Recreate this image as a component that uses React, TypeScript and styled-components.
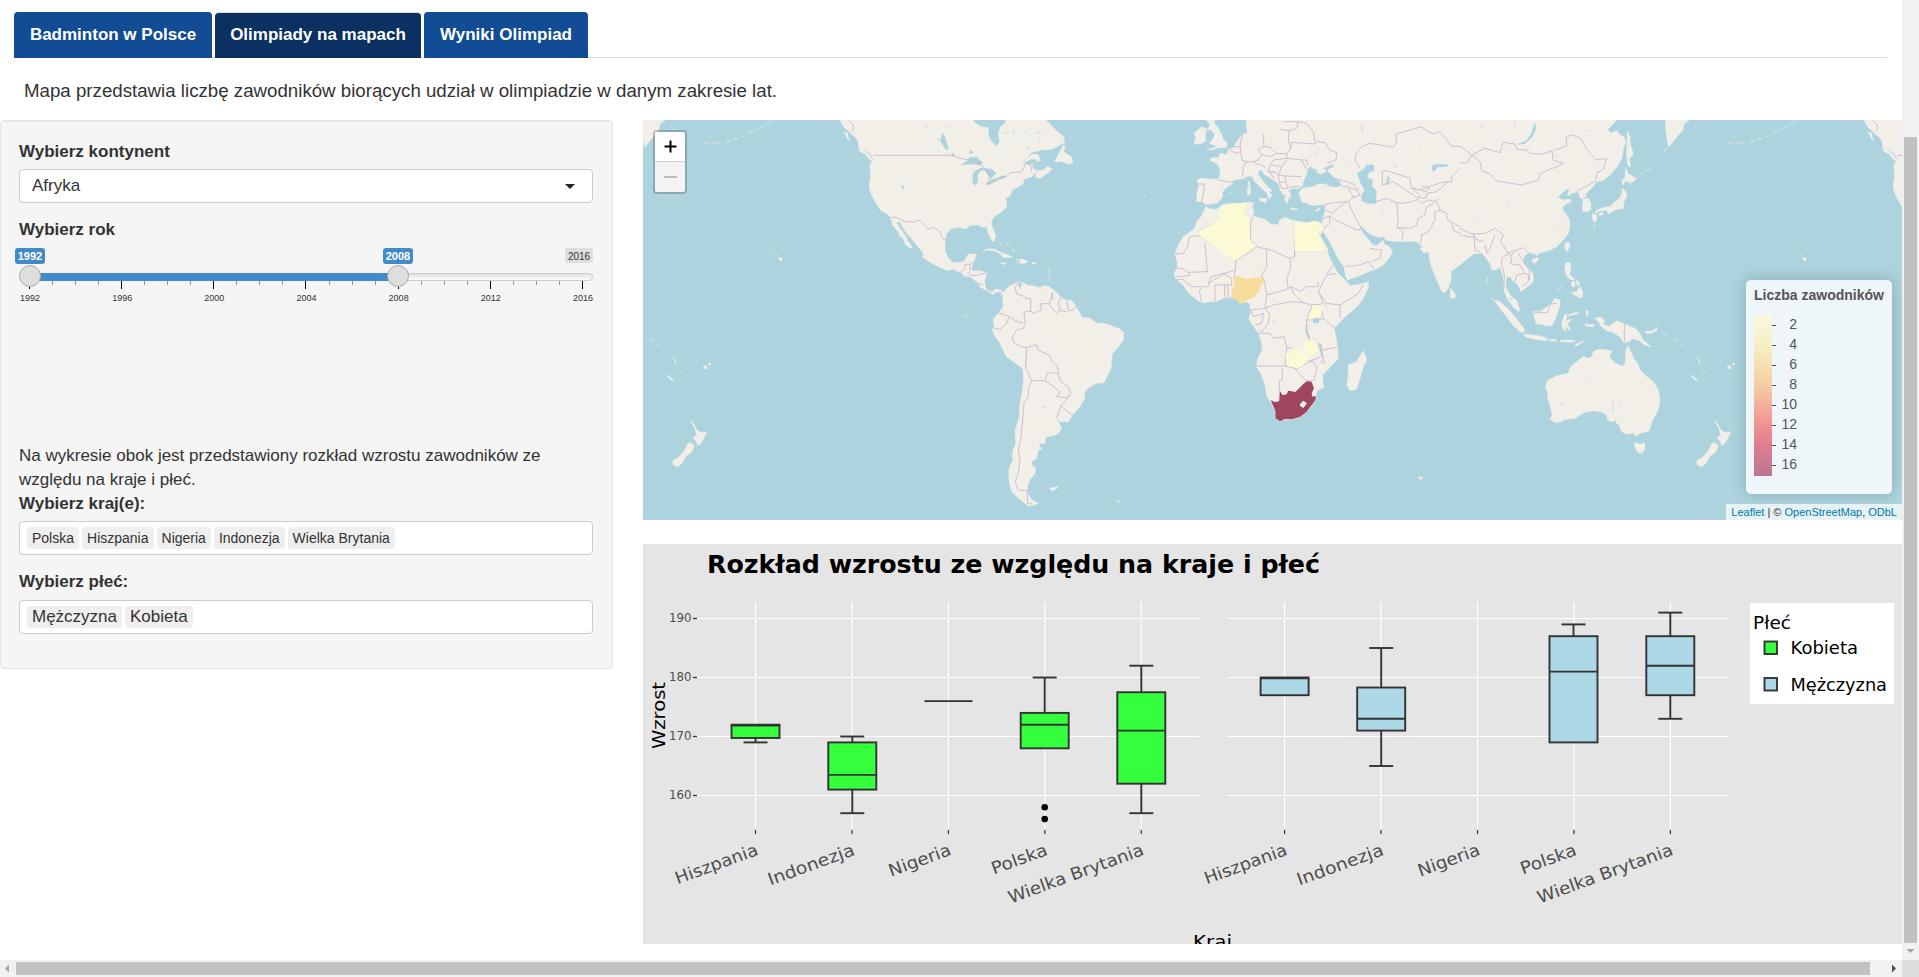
import React from "react";
import styled, { createGlobalStyle } from "styled-components";

const Global = createGlobalStyle`
  * { box-sizing: border-box; }
  html, body { margin: 0; padding: 0; background: #fff; overflow: hidden; }
  body { font-family: "Liberation Sans", Arial, sans-serif; font-size: 17px; line-height: 24.29px; color: #333; }
`;

const Frame = styled.div`
  display: grid;
  grid-template-columns: 1902px 17px;
  grid-template-rows: 960px 17px;
  width: 1919px;
  height: 977px;
  overflow: hidden;
`;
const Page = styled.main`
  overflow: hidden;
  padding-top: 12px;
`;
const Tabs = styled.nav`
  display: flex;
  gap: 3px;
  height: 46px;
  margin: 0 15px 0 14px;
  border-bottom: 1px solid #ddd;
`;
const Tab = styled.a<{ $active?: boolean; $w: number }>`
  width: ${(p) => p.$w}px;
  height: 46px;
  flex: none;
  border-radius: 4px 4px 0 0;
  border-top: 1px solid ${(p) => (p.$active ? "#ddd" : "#114c95")};
  background: ${(p) => (p.$active ? "#0a3161" : "#114c95")};
  color: #fff;
  font-weight: bold;
  line-height: 43px;
  text-align: center;
  white-space: nowrap;
`;
const Intro = styled.p`
  margin: 20px 0 17px 24px;
  font-size: 18.7px;
  line-height: 25px;
`;
const Columns = styled.div`
  display: flex;
  align-items: flex-start;
  gap: 30px;
`;
const Sidebar = styled.aside`
  width: 613px;
  height: 549px;
  padding: 19px 19px 19px 18px;
  background: #f5f5f5;
  border: 1px solid #e3e3e3;
  border-radius: 4px;
  box-shadow: inset 0 1px 1px rgba(0, 0, 0, 0.05);
  flex: none;
`;
const Label = styled.label`
  display: block;
  font-weight: bold;
  margin-bottom: 5px;
`;
const Field = styled.div`
  display: flex;
  align-items: center;
  gap: 3px;
  width: 574px;
  height: 34px;
  margin: 0 0 15px;
  padding: 0 7px;
  background: #fff;
  border: 1px solid #ccc;
  border-radius: 4px;
`;
const Selected = styled.span`
  flex: 1;
  padding-left: 5px;
  line-height: 30px;
  padding-bottom: 1px;
`;
const Caret = styled.span`
  margin-right: 10px;
  border: 5px solid transparent;
  border-top-color: #222;
  border-bottom: 0;
`;
const Chip = styled.span<{ $small?: boolean }>`
  height: 22px;
  padding: 0 5px;
  border-radius: 3px;
  background: #efefef;
  font-size: ${(p) => (p.$small ? 14 : 17)}px;
  line-height: ${(p) => (p.$small ? 22 : 21)}px;
  white-space: nowrap;
`;
const SliderArt = styled.svg`
  display: block;
  width: 590px;
  height: 66px;
  margin: -4px 0 0 -9px;
  overflow: visible;
`;
const Note = styled.p`
  margin: 134px 0 0;
  width: 540px;
`;
const Right = styled.section`
  display: flex;
  flex-direction: column;
  gap: 24px;
  width: 1259px;
`;
const MapBox = styled.div`
  position: relative;
  height: 400px;
  overflow: hidden;
  background: #acd3de;
`;
const Art = styled.svg`
  display: block;
  width: 1259px;
  height: 400px;
`;
const Zoom = styled.div`
  position: absolute;
  left: 10px;
  top: 10px;
  border: 2px solid rgba(0, 0, 0, 0.2);
  border-radius: 4px;
  background-clip: padding-box;
`;
const ZoomButton = styled.div<{ $off?: boolean }>`
  display: grid;
  place-items: center;
  width: 30px;
  height: 30px;
  background: ${(p) => (p.$off ? "#f4f4f4" : "#fff")};
  border-bottom: ${(p) => (p.$off ? "0" : "1px solid #ccc")};
  border-radius: ${(p) => (p.$off ? "0 0 2px 2px" : "2px 2px 0 0")};
  color: ${(p) => (p.$off ? "#bbb" : "#000")};
`;
const Legend = styled.div`
  position: absolute;
  right: 10px;
  top: 160px;
  width: 146px;
  height: 214px;
  padding: 6px 8px;
  border-radius: 5px;
  background: rgba(255, 255, 255, 0.8);
  box-shadow: 0 0 15px rgba(0, 0, 0, 0.2);
  color: #555;
  font-size: 14px;
  line-height: 18px;
`;
const LegendTitle = styled.strong`
  display: block;
  white-space: nowrap;
`;
const LegendArt = styled.svg`
  display: block;
  width: 60px;
  height: 170px;
  margin-top: 11px;
  overflow: visible;
`;
const Credit = styled.div`
  position: absolute;
  right: 0;
  bottom: 0;
  height: 16px;
  width: 176px;
  padding: 0 5px;
  background: rgba(255, 255, 255, 0.7);
  font-size: 11px;
  line-height: 16px;
  white-space: nowrap;
  text-align: right;
  span { color: #0078a8; }
`;
const VBar = styled.div`
  background: #f1f1f1;
  padding: 137px 2px 0;
  display: flex;
  flex-direction: column;
  align-items: center;
`;
const VThumb = styled.div`
  width: 13px;
  height: 806px;
  background: #c1c1c1;
`;
const HBar = styled.div`
  display: flex;
  align-items: center;
  background: #f1f1f1;
`;
const HThumb = styled.div`
  width: 1854px;
  height: 13px;
  background: #c1c1c1;
`;
const Corner = styled.div`
  background: #dcdcdc;
`;
const Arrow = styled.svg`
  display: block;
  flex: none;
`;

/* Map outlines, three units per pixel; one world is 3072 units wide. */
const americas =
  "M590 0L600 30 610 50 625 62 632 70 650 85 656 100 658 112 680 122 697 138 701 150 693 160 690 168 692 200 688 225 691 245 700 265 715 290 723 302 740 310 752 322 758 345 775 365 780 378 790 385 795 402 812 416 816 412 803 392 798 380 785 362 775 348 768 336 780 335 787 350 800 370 818 390 838 415 850 430 848 442 870 457 900 472 925 482 940 477 955 485 965 490 975 499 992 501 1003 510 1018 520 1020 530 1042 543 1060 553 1068 545 1082 545 1088 558 1090 590 1075 610 1062 625 1060 640 1065 652 1057 656 1062 675 1078 695 1092 725 1100 740 1125 758 1148 775 1151 800 1148 840 1140 880 1138 920 1125 965 1128 1000 1118 1025 1119 1050 1107 1075 1107 1110 1115 1145 1140 1168 1165 1188 1180 1186 1194 1180 1175 1170 1162 1150 1162 1130 1170 1108 1185 1090 1187 1075 1175 1065 1174 1055 1190 1045 1195 1020 1205 1018 1195 1002 1215 1000 1218 980 1240 977 1255 970 1265 955 1258 940 1250 925 1262 934 1285 936 1297 915 1320 890 1333 865 1334 845 1350 830 1370 820 1392 818 1402 797 1413 775 1416 732 1435 710 1450 690 1451 668 1440 657 1420 650 1400 642 1370 640 1350 625 1325 622 1320 610 1305 585 1295 572 1270 568 1260 558 1250 548 1228 530 1212 527 1200 533 1180 528 1165 527 1150 518 1140 513 1122 522 1105 530 1090 548 1082 540 1065 538 1055 548 1045 541 1037 532 1033 518 1036 505 1040 488 1020 482 1000 484 993 478 998 460 1005 445 1008 432 985 432 975 452 960 458 940 458 925 445 915 425 915 395 920 370 935 355 960 352 978 357 990 346 1015 345 1028 352 1040 350 1045 370 1055 390 1062 395 1067 380 1060 358 1053 340 1060 322 1085 305 1100 290 1100 275 1095 265 1110 258 1118 238 1135 230 1150 220 1150 208 1175 200 1192 182 1186 200 1200 205 1220 192 1237 176 1222 170 1210 180 1190 183 1175 170 1182 155 1200 152 1195 135 1175 133 1160 145 1145 168 1152 150 1175 127 1205 120 1235 118 1262 104 1274 98 1270 78 1255 68 1235 48 1218 30 1210 0Z";
const eurasia =
  "M620 0L618 30 622 68 610 72 602 80 590 95 582 112 565 120 560 134 540 130 538 142 510 145 514 153 530 160 540 175 540 195 536 208 505 207 480 205 471 212 477 228 471 250 470 275 488 275 497 283 520 282 535 277 547 262 548 245 560 232 577 222 576 213 590 208 610 206 620 200 635 198 645 215 660 230 680 248 685 262 688 268 696 255 685 245 696 242 680 228 668 212 655 195 655 183 665 180 672 192 690 203 706 213 718 223 720 238 728 252 738 258 733 268 741 280 746 270 742 262 752 262 750 250 745 242 757 235 775 235 788 228 790 212 800 192 803 175 815 168 822 178 835 177 830 187 843 192 860 183 848 175 870 165 885 160 878 172 863 180 870 190 885 205 900 213 905 228 890 232 870 230 855 222 835 222 820 230 800 233 785 236 777 250 782 265 785 275 800 280 815 287 835 285 855 283 857 300 850 322 847 340 845 358 865 388 880 415 895 448 912 470 916 495 922 510 950 500 985 485 1010 476 1030 465 1040 452 1050 440 1058 422 1048 410 1032 402 1028 390 1020 400 1008 408 995 403 985 388 972 374 958 350 965 348 978 362 995 375 1015 382 1030 380 1038 390 1055 393 1085 395 1120 393 1135 398 1150 412 1140 415 1152 428 1166 425 1168 445 1175 470 1188 505 1205 542 1213 548 1222 540 1233 510 1233 485 1255 468 1285 445 1300 432 1325 428 1335 440 1350 460 1355 480 1368 480 1380 470 1388 495 1392 520 1393 545 1405 570 1420 592 1437 606 1438 595 1430 572 1415 562 1405 545 1396 530 1400 500 1412 502 1422 515 1435 525 1443 545 1460 532 1475 520 1481 510 1478 490 1462 470 1450 458 1450 440 1465 428 1480 430 1490 436 1500 428 1525 422 1550 410 1570 390 1585 370 1590 345 1585 322 1572 305 1567 292 1580 280 1595 275 1590 268 1568 270 1553 262 1565 250 1580 237 1593 237 1585 245 1583 258 1595 250 1610 245 1620 252 1618 260 1630 270 1628 290 1628 303 1640 305 1652 300 1653 282 1645 265 1635 255 1645 242 1660 230 1668 215 1690 210 1710 195 1735 165 1747 140 1750 115 1757 95 1752 80 1740 75 1730 62 1712 70 1703 58 1720 42 1730 28 1735 0Z";
const africa =
  "M497 291L512 297 530 298 548 284 575 280 600 280 625 277 640 279 637 292 642 305 636 316 652 322 675 328 690 341 715 345 720 330 735 322 755 330 780 335 805 338 825 333 845 340 846 358 844 373 835 358 832 362 850 395 862 415 865 435 880 465 890 485 905 500 920 515 930 527 950 525 985 517 985 532 975 555 960 580 940 600 915 620 895 642 883 655 887 680 893 710 895 745 870 772 848 795 848 815 851 832 830 842 828 865 815 885 800 905 780 922 755 928 735 928 720 934 705 925 705 903 693 878 682 862 675 825 665 795 650 770 652 750 667 720 663 690 656 670 640 648 627 628 632 605 630 582 620 575 600 580 590 568 575 562 550 565 530 575 510 575 485 579 465 565 445 548 430 525 415 515 405 500 403 488 412 475 412 455 405 432 415 405 430 380 445 370 465 355 470 335 485 318Z";
const islands4 = [
  "M45 155L58 128 70 105 76 108 70 125 95 142 98 160 85 162 62 154Z",
  "M462 100L468 85 462 70 485 50 500 58 495 75 496 95 475 103Z",
  "M500 30L510 45 502 58 515 60 525 75 515 92 508 100 530 108 518 115 500 118 515 120 535 113 560 112 562 98 550 90 545 75 535 55 522 38 525 30Z",
  "M970 722L980 750 972 765 960 805 950 838 930 842 920 825 925 800 925 765 950 755Z",
  "M1232 535L1240 545 1247 558 1240 566 1231 562Z",
  "M625 215L629 213 629 230 625 230Z M622 234L632 233 630 255 622 254Z M658 266L680 265 678 278 658 270Z M750 294L774 297 768 300 752 298Z M828 300L840 293 836 301 830 304Z",
  "M670 28L695 28 690 42 672 45Z M642 38L655 36 655 50 642 52Z M658 42L668 45 664 52Z",
  "M30 1135L54 1130 48 1138 34 1142Z M228 1168L242 1178 236 1176Z M1135 1100L1150 1103 1142 1109Z",
  "M396 365L400 368 M402 365L406 370 M412 368L418 370 M430 360L434 365 M308 260L318 262 M330 267L334 268 M335 470L340 474 M345 485L352 488 M1020 802L1024 804 M1038 793L1042 796 M870 1072L875 1073 M568 250L576 248 M586 245L590 246",
];
const islands5 = [
  "M617 0L617 50 620 80 626 110 640 95 652 78 668 62 672 42 690 28 690 0Z",
  "M503 65L510 80 510 100 520 132 508 145 512 170 503 165 500 130 502 90Z",
  "M497 172L503 190 520 200 530 207 512 220 497 212 488 225 486 210 495 205Z",
  "M488 235L498 245 500 260 492 275 490 295 470 298 455 305 445 312 440 300 420 302 405 310 410 300 435 292 450 290 465 275 480 265 486 250Z",
  "M398 312L410 315 410 330 403 338 397 325Z M417 310L430 306 428 314 418 316Z",
  "M326 396L330 405 322 425 314 415 316 400Z M218 448L232 442 236 448 225 460 217 456Z",
  "M318 458L330 458 333 475 328 492 345 510 330 508 320 498 314 478Z M360 530L368 545 367 562 355 562 335 548 350 545Z M335 515L345 515 343 530 335 528Z M350 510L358 520 355 528 348 520Z",
  "M102 570L120 575 145 598 165 620 180 640 192 655 192 668 180 665 158 645 140 620 118 592Z",
  "M192 672L215 675 240 678 262 686 260 692 225 688 195 680Z M268 688L290 690 288 694 270 692Z M300 692L325 690 345 692 335 697 305 695Z M345 704L372 692 360 702 348 708Z",
  "M285 565L300 570 300 585 292 610 285 630 275 648 250 645 228 640 222 615 220 605 240 605 262 590 275 580Z",
  "M315 612L325 618 350 612 355 606 330 612 320 618 318 632 335 628 322 640 332 662 322 655 318 640 316 664 308 655 305 640Z M378 600L386 605 380 620Z M375 642L405 645 398 650 378 648Z",
  "M405 624L425 622 435 635 425 640 445 650 470 632 500 645 525 655 540 670 545 685 560 700 572 710 555 705 535 690 515 685 510 695 490 697 480 680 455 665 440 662 425 650 415 635Z M555 665L580 662 590 652 592 660 575 670 558 670Z M605 665L625 680 M640 688L655 695 M660 700L672 710",
  "M504 708L515 730 520 745 533 760 540 780 560 800 580 815 595 840 600 875 592 905 575 935 568 962 540 970 530 978 520 970 500 972 485 965 478 945 470 940 465 920 462 935 445 932 440 915 425 905 400 902 370 908 345 925 315 928 298 937 285 937 270 928 277 915 270 885 262 862 264 845 257 835 262 812 290 798 325 790 332 770 355 752 372 738 380 745 395 742 400 725 415 718 455 722 448 742 465 758 488 770 497 755 497 725Z",
  "M524 998L540 1003 554 998 553 1020 545 1030 535 1028 525 1012Z",
  "M764 932L775 945 782 960 795 968 812 965 805 980 795 1000 785 1007 782 995 772 985 782 975 778 958Z",
  "M765 998L775 1008 765 1028 748 1040 738 1060 725 1070 710 1063 712 1052 730 1040 745 1022 755 1002Z",
  "M690 795L700 800 714 812 705 810Z M803 768L812 768 812 776 804 776Z M816 762L825 760 822 766Z",
  "M1030 442L1040 446 1036 452 1030 450Z M1018 432L1026 436 M997 424L1002 426 M1008 429L1013 431",
  "M705 50L712 56 M762 84L768 88 M775 92L780 95 M805 98L820 99 M830 99L855 98 M868 96L885 93 M895 88L905 86 M918 80L925 77 M935 72L960 60 M965 55L985 46 M990 42L1010 32 M620 115L612 130 M600 145L595 155 M575 172L560 182 M550 186L530 203 M405 342L402 355 M385 375L378 382 M358 398L350 404",
  "M305 525L290 545 M82 500L80 525 M95 560L100 570 M712 740L718 755 M715 745L720 765 M732 780L733 788 M710 1120L706 1123",
];
const islands3 = [
  "M1028 424L1045 416 1065 418 1085 428 1105 435 1115 442 1090 442 1080 430 1060 422 1045 420Z",
  "M1128 448L1150 448 1164 456 1150 460 1130 458 1140 455Z M1082 458L1097 460 1090 464Z M1176 458L1188 459 1186 462 1177 462Z",
  "M655 110L675 122 692 140 700 152 690 150 675 132 660 124Z M612 66L622 70 625 85 632 94 624 88Z",
  "M1085 380L1088 385 M1080 400L1086 410 M1100 402L1112 408 M1118 415L1125 425 M1205 460L1215 464 M1225 470L1230 495 M1228 500L1224 515 M970 616L988 625",
];
const lakes = [
  "M1000 20L1003 35 1022 48 1046 52 1048 80 1058 97 1070 107 1077 97 1073 70 1080 50 1095 38 1095 20Z",
  "M963 165L980 155 990 142 1010 142 1028 158 1020 165 1000 162 985 162Z",
  "M1000 190L1010 180 1025 175 1040 178 1020 182 1012 195 1013 215 1005 226 998 215Z",
  "M1030 175L1055 178 1068 190 1052 205 1045 195Z M1037 225L1055 208 1075 207 1050 222Z M1070 205L1090 197 1100 200 1085 207Z",
  "M892 85L905 95 905 70 915 80 925 118 915 115 905 98Z M785 226L793 232 790 238Z M935 128L944 134 938 140Z M990 122L998 124 996 130 990 130Z",
  "M1155 158L1175 148 1190 150 1182 160 1165 164Z M1148 508 L1135 525 1140 535Z",
  "M850 45L865 52 M915 45L925 55 M1090 68L1105 70 M1118 60L1125 75 M1150 65L1155 72 M1190 68L1205 70 M1200 85L1195 100 M1160 112L1170 115 M1155 745L1157 760 M1208 890L1218 893 M1210 552L1214 556",
];
const lakes4 = [
  "M952 190L970 180 980 165 1000 165 1002 182 985 188 982 205 998 210 995 230 1008 240 1008 280 985 280 965 272 968 250 975 240 962 218Z",
  "M1175 172L1180 165 1200 163 1225 165 1223 168 1195 170 1180 185Z M1038 222L1045 198 1048 205 1042 225Z",
  "M818 627L838 628 836 636 822 640Z M1115 235L1125 235 M820 130L832 134 M1060 168L1072 170 M965 45L968 65 M910 148L915 155 M1135 118L1138 120 M1025 295L1030 300 M855 580L860 592 M700 630L705 640 M820 685L830 690",
  "M800 645L801 665 810 685 806 685 797 665Z M838 700L845 705 843 720 850 740 845 738 840 720Z",
  "M2 122L40 120 38 133 10 128Z",
];
const lakes5 = [
  "M226 42L226 60 215 82 195 100 175 103 200 92 215 70 222 45Z",
  "M60 45L72 52 M160 35L168 50 M375 65L385 60 M412 185L420 188 M138 275L147 282 M48 328L52 334 M78 116L85 122 M145 110L148 114 M285 135L292 140 M385 813L392 815 M458 868L460 905 M478 890L484 893 M445 780L448 782 M300 880L310 880 M310 338L316 346 M280 355L284 358",
];
const borders3 =
  "M700 136L940 136 960 145 990 150 1010 157 1025 167 1045 185 1048 208 1040 222 1060 217 1080 205 1100 198 1112 187 1140 187 1150 178 1155 160 1165 157 1172 165 1175 187 M752 322L768 322 795 335 825 336 830 331 842 332 865 358 880 352 900 365 908 385 918 390 M625 32L640 45 638 65 M962 488L975 475 975 463 990 463 990 488 982 492 M990 463L997 457 M988 497L1015 495 1038 488 M1018 520L1030 525 M1042 530L1044 545 M1137 515L1125 530 1130 552 1150 558 1155 565 1172 566 1172 603 1180 610 1205 600 1200 582 1228 580 1238 548 M1228 582L1240 600 1250 608 1262 600 M1172 603L1152 606 1155 640 1150 655 M1075 608L1105 618 1125 632 1150 640 M1107 620L1100 640 1080 658 1062 655 M1150 655L1130 660 1117 680 1120 698 1145 710 1160 713 1190 703 1195 720 1230 738 1235 755 1250 765 1257 790 1222 788 1215 812 1175 812 1165 790 1157 775 1160 713 M1175 812L1165 835 1165 860 1152 880 1148 930 1143 980 1135 1020 1140 1050 1135 1090 1125 1115 1135 1140 1162 1142 1163 1180 1178 1182 M1215 812L1240 830 1260 845 1250 860 1280 863 1292 850 1285 830 1260 812 1255 790 M1292 855L1262 888 1297 915 M1262 888L1250 925 M1135 447L1137 460 M1262 560L1255 580 1262 602 1280 605 M1280 570L1285 602 1300 600 1310 585 M1235 548L1238 570";
const borders4 =
  "M472 222L492 222 492 240 485 275 M535 210L575 217 M568 120L590 130 602 125 606 150 618 155 610 172 607 200 M602 125L600 105 608 75 M618 155L640 155 650 163 665 165 678 175 M575 110L600 110 M670 72L672 110 655 118 665 135 655 150 640 155 M672 110L690 112 710 130 690 140 665 135 M710 130L740 132 752 115 745 90 747 62 720 58 M747 62L770 55 775 35 730 35 M775 35L800 40 820 65 825 95 M752 115L755 97 825 102 830 95 855 98 868 120 890 128 888 150 860 160 M740 132L742 145 700 150 690 165 685 185 M742 145L785 150 800 178 M785 150L800 150 803 165 M695 165L725 170 740 150 M725 170L715 195 735 198 785 200 M680 185L705 185 715 195 718 218 738 215 735 198 M738 215L742 232 780 228 M718 218L725 235 745 235 M705 185L690 190 705 208 M885 205L910 212 940 222 955 240 M925 235L940 262 960 255 950 240 925 232 905 228 M940 262L925 275 885 278 855 283 M925 275L935 300 950 330 962 352 M960 255L970 262 M858 300L875 310 905 285 920 275 M850 325L870 318 885 330 912 342 950 360 962 358 M850 355L870 340 868 320 M918 470L960 465 985 455 1000 475 M995 455L1020 445 1025 420 1015 420 990 415 M1008 275L1040 265 1070 278 1090 280 1115 275 1135 268 1145 280 1165 270 1185 275 1195 265 M1070 278L1075 330 1072 352 1090 365 1085 392 M1070 352L1110 355 1130 345 1135 325 1155 315 1160 290 1185 280 M1142 400L1145 375 1165 365 1185 330 1185 305 1200 300 1220 310 1222 330 1260 350 M1200 300L1190 275 1180 275 M1235 340L1240 360 1262 372 M1027 228L1027 185 1040 182 1065 190 1110 205 1115 235 1140 240 1165 230 1215 215 1235 215 1235 200 1260 175 M1027 225L1060 215 1090 235 1130 262 1140 262 M1140 240L1155 245 1170 235 1160 232 1145 230 M1120 235L1145 265 1160 262 1160 250 1190 245 1225 215 M960 175L945 150 948 130 965 110 990 100 1060 112 1070 95 1068 72 1145 50 1160 62 1180 72 1200 65 1235 108 1260 110 M538 328L530 338 500 350 478 362 475 376 450 380 445 390 445 405 430 430 405 432 M475 376L590 452 650 410 680 418 680 470 665 495 672 512 M495 400L502 485 445 487 425 475 412 475 M588 452L586 480 555 490 505 520 505 530 485 530 478 545 485 578 M586 480L582 505 M680 415L750 445 752 475 740 505 745 535 M640 320L632 335 632 390 650 410 M612 312L628 330 M764 422L764 440 750 445 M764 422L858 422 M764 440L763 337 M672 512L678 540 680 555 735 540 755 530 780 545 800 530 835 530 835 515 M755 530L760 550 790 578 815 585 845 582 850 580 835 545 860 495 888 490 M860 495L880 465 M680 555L675 595 632 600 M675 595L700 585 755 575 790 578 M835 545L860 580 900 585 955 550 970 525 M900 585L900 625 M815 587L800 630 800 660 808 690 M845 600L850 625 885 655 M825 625L848 628 M800 630L815 630 M655 670L690 670 700 685 732 680 740 712 755 715 M740 712L736 768 650 768 M736 768L765 775 780 773 805 755 845 740 M765 775L785 800 800 813 822 810 830 775 820 755 805 755 M727 775L727 810 718 812 718 872 M832 700L845 720 892 712 M845 718L850 745 852 760 840 752 M445 487L450 495 430 500 408 498 M408 510L430 508 440 520 460 530 480 530 M525 575L525 525 550 525 M553 525L555 565 M563 525L565 562 M505 520L515 500 550 490 575 505 575 525 550 525 M632 600L640 620 670 610 665 640 645 645 M675 595L690 615 685 640 665 665 655 660";
const borders5 =
  "M0 108L35 135 75 115 120 128 130 97 165 102 170 118 200 120 210 130 245 133 275 122 280 150 310 160 290 170 265 180 242 190 235 210 185 225 110 213 90 192 65 182 60 155 35 135 20 160 0 158 M280 122L320 108 318 80 340 75 362 85 375 110 390 130 410 150 440 145 430 178 410 190 408 212 385 225 350 245 M368 265L385 262 M0 355L35 372 75 370 105 355 130 375 122 395 145 430 175 418 190 413 205 428 M40 372L48 388 72 395 M42 375L45 420 60 425 M0 375L40 382 M105 375L90 415 82 430 75 405 M145 430L125 445 125 465 133 495 132 530 M145 430L155 445 152 462 180 465 195 490 170 495 165 515 M195 490L205 495 205 515 185 530 M175 430L190 455 208 480 208 510 M150 440L165 425 M148 565L158 570 M222 608L262 608 270 582 290 580 M493 642L493 695";

const countries: [string, string][] = [
  ["#fbfad4", "M538 298L555 285 600 280 620 279 618 300 612 312 628 325 630 350 630 385 635 397 650 408 590 450 580 451 540 422 475 375 478 362 500 350 530 335 540 328Z"],
  ["#fbfad4", "M762 337L800 340 820 334 840 337 845 345 846 358 843 372 835 360 830 350 850 398 858 423 764 423Z"],
  ["#f7dd9c", "M582 503L595 498 615 507 640 504 665 502 672 512 660 535 645 560 625 568 612 579 598 580 588 568 574 562 575 540 582 525Z"],
  ["#fbfad4", "M817 587L843 586 847 600 840 617 825 620 820 627 803 627 808 610 817 600Z"],
  ["#fbfad4", "M737 730L755 730 755 717 785 720 790 733 803 730 793 720 793 695 810 688 830 700 833 722 808 743 802 752 785 770 775 773 740 768Z"],
];
const southAfrica =
  "M692 870L705 877 718 873 720 843 728 856 740 853 745 842 766 846 790 822 800 814 815 815 822 835 815 850 817 860 828 858 826 870 815 885 800 905 780 921 755 928 735 927 720 934 706 925 706 903ZM780 882L790 872 801 880 790 894 780 888Z";

const World = () => (
  <>
    <g fill="#f2efe9" stroke="#f2efe9" strokeWidth="2" strokeLinejoin="round">
      <path d={americas} />
      {islands3.map((d) => <path key={d} d={d} />)}
      <g transform="translate(1200 0)">
        <path d={eurasia} />
        <path d={africa} />
        {islands4.map((d) => <path key={d} d={d} />)}
      </g>
      <g transform="translate(2460 0)">{islands5.map((d) => <path key={d} d={d} />)}</g>
    </g>
    <g fill="#acd3de" stroke="#acd3de" strokeWidth="2">
      {lakes.map((d) => <path key={d} d={d} />)}
      <g transform="translate(1200 0)">{lakes4.map((d) => <path key={d} d={d} />)}</g>
      <g transform="translate(2460 0)">{lakes5.map((d) => <path key={d} d={d} />)}</g>
    </g>
    <g fill="none" stroke="#cbb5cb" strokeWidth="2.6" strokeLinejoin="round">
      <path d={borders3} />
      <path d={borders4} transform="translate(1200 0)" />
      <path d={borders5} transform="translate(2460 0)" />
    </g>
  </>
);

const WorldMap = () => (
  <Art viewBox="0 0 1259 400">
    <g transform="translate(-3 -10) scale(.33333)">
      <g transform="translate(-3072 0)"><World /></g>
      <World />
      <g transform="translate(3072 0)"><World /></g>
      <g transform="translate(1200 0)">
        {countries.map(([fill, d]) => <path key={d} d={d} fill={fill} />)}
        <path d={southAfrica} fill="#a0455e" fillRule="evenodd" />
      </g>
    </g>
  </Art>
);

const Scale = () => (
  <LegendArt>
    <defs>
      <linearGradient id="heat" x1="0" y1="0" x2="0" y2="1">
        <stop offset="0" stopColor="#f8fae0" />
        <stop offset=".19" stopColor="#f6edc4" />
        <stop offset=".31" stopColor="#f6e0b2" />
        <stop offset=".44" stopColor="#f6cba4" />
        <stop offset=".56" stopColor="#f4b09b" />
        <stop offset=".69" stopColor="#ed9191" />
        <stop offset=".81" stopColor="#df7d90" />
        <stop offset="1" stopColor="#b9778f" />
      </linearGradient>
    </defs>
    <rect width="18" height="161" fill="url(#heat)" />
    {[2, 4, 6, 8, 10, 12, 14, 16].map((n, i) => (
      <g key={n}>
        <path d={`M18 ${10.5 + i * 20}h4`} stroke="#555" />
        <text x="43" y={14 + i * 20} textAnchor="end" fill="#555">{n}</text>
      </g>
    ))}
  </LegendArt>
);

const Slider = () => (
  <SliderArt viewBox="10 244 590 66">
    <defs>
      <linearGradient id="rail" x1="0" y1="0" x2="0" y2="1">
        <stop offset="0" stopColor="#dedede" />
        <stop offset="1" stopColor="#fff" />
      </linearGradient>
    </defs>
    <rect x="19.5" y="273.5" width="573" height="7" rx="3.5" fill="url(#rail)" stroke="#ccc" />
    <rect x="30" y="273" width="368" height="8" fill="#428bca" />
    {Array.from({ length: 25 }, (_, i) => (
      <path
        key={i}
        d={`M${Math.round(29 + i * 23.04) + 0.5} 281v${i % 4 ? 4 : 8}`}
        stroke={i % 4 ? "#999" : "#000"}
      />
    ))}
    {[1992, 1996, 2000, 2004, 2008, 2012, 2016].map((y, i) => (
      <text key={y} x={30 + i * 92.16} y="301" fontSize="9" fill="#333" textAnchor="middle">{y}</text>
    ))}
    {[[30, 1992], [398, 2008]].map(([x, y]) => (
      <g key={y}>
        <circle cx={x} cy="276" r="10.5" fill="#dedede" stroke="#ababab" />
        <rect x={x - 15} y="248" width="30" height="16" rx="3" fill="#428bca" />
        <text x={x} y="260" fontSize="11" fontWeight="bold" fill="#fff" textAnchor="middle">{y}</text>
      </g>
    ))}
    <rect x="565" y="248" width="28" height="15" rx="3" fill="#dedede" />
    <text x="579" y="259.5" fontSize="10" fill="#333" textAnchor="middle">2016</text>
  </SliderArt>
);

type Box = { x: number; lo: number; q1: number; med: number; q3: number; hi: number; out?: number[] };
const women: Box[] = [
  { x: 755.5, lo: 169, q1: 169.75, med: 171.85, q3: 172, hi: 172 },
  { x: 852.3, lo: 157, q1: 161, med: 163.5, q3: 169, hi: 170 },
  { x: 948.5, lo: 176, q1: 176, med: 176, q3: 176, hi: 176 },
  { x: 1044.7, lo: 168, q1: 168, med: 172, q3: 174, hi: 180, out: [158, 156] },
  { x: 1141.3, lo: 157, q1: 162, med: 171, q3: 177.5, hi: 182 },
];
const men: Box[] = [
  { x: 1284.6, lo: 177, q1: 177, med: 179.85, q3: 180, hi: 180 },
  { x: 1381.2, lo: 165, q1: 171, med: 173, q3: 178.3, hi: 185 },
  { x: 1573.5, lo: 169, q1: 169, med: 181, q3: 187, hi: 189 },
  { x: 1670.3, lo: 173, q1: 177, med: 182, q3: 187, hi: 191 },
];
const yOf = (v: number) => 618.5 + (190 - v) * 5.9;
const names: [string, number][] = [["Hiszpania", 87], ["Indonezja", 91], ["Nigeria", 65], ["Polska", 58.5], ["Wielka Brytania", 143]];
const chosen = ["Polska", "Hiszpania", "Nigeria", "Indonezja", "Wielka Brytania"];

const BoxMark = ({ b, fill }: { b: Box; fill: string }) => (
  <g stroke="#333" strokeWidth="1.9" fill="none">
    {b.q1 !== b.q3 && (
      <>
        <path d={`M${b.x} ${yOf(b.lo)}V${yOf(b.q1)}M${b.x} ${yOf(b.q3)}V${yOf(b.hi)}`} />
        {b.lo !== b.q1 && <path d={`M${b.x - 12} ${yOf(b.lo)}h24`} />}
        {b.hi !== b.q3 && <path d={`M${b.x - 12} ${yOf(b.hi)}h24`} />}
        <rect x={b.x - 24} y={yOf(b.q3)} width="48" height={yOf(b.q1) - yOf(b.q3)} fill={fill} />
      </>
    )}
    <path d={`M${b.x - 24} ${yOf(b.med)}h48`} />
    {b.out?.map((v) => <circle key={v} cx={b.x} cy={yOf(v)} r="3.3" fill="#000" stroke="none" />)}
  </g>
);

const Facet = ({ x, end, first }: { x: number; end: number; first: number }) => (
  <>
    {[190, 180, 170, 160].map((v) => (
      <path key={v} d={`M${x} ${yOf(v)}H${end}`} stroke="#fff" strokeWidth="1.2" />
    ))}
    {names.map(([n, len], i) => {
      const cx = first + i * 96.45;
      return (
        <g key={n}>
          <path d={`M${cx} 602V829`} stroke="#fff" strokeWidth="1.2" />
          <path d={`M${cx} 830v4`} stroke="#333" strokeWidth="1.2" />
          <text
            transform={`translate(${cx + 3.8} 854.5) rotate(-20)`}
            textAnchor="end"
            fontSize="17"
            fill="#4d4d4d"
            textLength={len}
            lengthAdjust="spacingAndGlyphs"
          >
            {n}
          </text>
        </g>
      );
    })}
  </>
);

const ChartArt = styled(Art)`
  background: #e5e5e5;
  font-family: Verdana, "DejaVu Sans", sans-serif;
`;

const Chart = () => (
  <ChartArt viewBox="643 544 1259 400">
    <text x="707" y="572.5" fontSize="24" fontWeight="bold" textLength="613" lengthAdjust="spacingAndGlyphs">
      Rozkład wzrostu ze względu na kraje i płeć
    </text>
    <Facet x={697} end={1199} first={755.5} />
    <Facet x={1227} end={1728} first={1284.6} />
    {[190, 180, 170, 160].map((v) => (
      <g key={v}>
        <path d={`M693 ${yOf(v)}h4`} stroke="#333" strokeWidth="1.3" />
        <text x="669" y={yOf(v) + 3.5} fontSize="11.7" fill="#4d4d4d" textLength="22.5" lengthAdjust="spacingAndGlyphs">{v}</text>
      </g>
    ))}
    {women.map((b) => <BoxMark key={b.x} b={b} fill="#33ff3c" />)}
    {men.map((b) => <BoxMark key={b.x} b={b} fill="#add8e6" />)}
    <text transform="translate(665 749) rotate(-90)" fontSize="17.7" textLength="67" lengthAdjust="spacingAndGlyphs">Wzrost</text>
    <text x="1193" y="947.5" fontSize="17.7" textLength="39" lengthAdjust="spacingAndGlyphs">Kraj</text>
    <rect x="1750" y="603" width="144" height="101" fill="#fff" />
    <text x="1753" y="628.5" fontSize="17.7" textLength="38" lengthAdjust="spacingAndGlyphs">Płeć</text>
    <rect x="1764.5" y="641.5" width="12.5" height="12.5" fill="#33ff3c" stroke="#333" strokeWidth="1.9" />
    <text x="1790.5" y="654" fontSize="17.7" textLength="67.5" lengthAdjust="spacingAndGlyphs">Kobieta</text>
    <rect x="1764.5" y="678" width="12.5" height="12.5" fill="#add8e6" stroke="#333" strokeWidth="1.9" />
    <text x="1790.5" y="691" fontSize="17.7" textLength="96.5" lengthAdjust="spacingAndGlyphs">Mężczyzna</text>
  </ChartArt>
);

export default function App() {
  return (
    <Frame>
      <Global />
      <Page>
        <Tabs>
          <Tab $w={198}>Badminton w Polsce</Tab>
          <Tab $w={206} $active>Olimpiady na mapach</Tab>
          <Tab $w={164}>Wyniki Olimpiad</Tab>
        </Tabs>
        <Intro>Mapa przedstawia liczbę zawodników biorących udział w olimpiadzie w danym zakresie lat.</Intro>
        <Columns>
          <Sidebar>
            <Label>Wybierz kontynent</Label>
            <Field><Selected>Afryka</Selected><Caret /></Field>
            <Label>Wybierz rok</Label>
            <Slider />
            <Note>Na wykresie obok jest przedstawiony rozkład wzrostu zawodników ze względu na kraje i płeć.</Note>
            <Label>Wybierz kraj(e):</Label>
            <Field>{chosen.map((n) => <Chip $small key={n}>{n}</Chip>)}</Field>
            <Label>Wybierz płeć:</Label>
            <Field><Chip>Mężczyzna</Chip><Chip>Kobieta</Chip></Field>
          </Sidebar>
          <Right>
            <MapBox>
              <WorldMap />
              <Zoom>
                <ZoomButton>
                  <svg width="13" height="13"><path d="M6.5 .5v12M.5 6.500h12" stroke="currentColor" strokeWidth="2" /></svg>
                </ZoomButton>
                <ZoomButton $off>
                  <svg width="13" height="13"><path d="M0 6h13" stroke="currentColor" strokeWidth="2" /></svg>
                </ZoomButton>
              </Zoom>
              <Legend>
                <LegendTitle>Liczba zawodników</LegendTitle>
                <Scale />
              </Legend>
              <Credit><span>Leaflet</span> | © <span>OpenStreetMap</span>, <span>ODbL</span></Credit>
            </MapBox>
            <Chart />
          </Right>
        </Columns>
      </Page>
      <VBar>
        <VThumb />
        <Arrow width="17" height="17"><path d="M4.5 6h8l-4 4z" fill="#a3a3a3" /></Arrow>
      </VBar>
      <HBar>
        <Arrow width="16" height="17"><path d="M9 4.500v8l-4-4z" fill="#a3a3a3" /></Arrow>
        <HThumb />
        <Arrow width="32" height="17"><path d="M22 4.500v8l4-4z" fill="#505050" /></Arrow>
      </HBar>
      <Corner />
    </Frame>
  );
}
